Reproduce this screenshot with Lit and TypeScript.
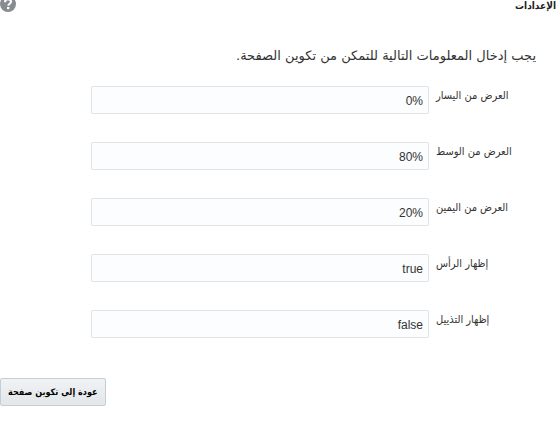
import { LitElement, html, css } from "lit";
import { customElement } from "lit/decorators.js";

interface Field {
  id: string;
  label: string;
  value: string;
}

const FIELDS: Field[] = [
  { id: "left-width", label: "العرض من اليسار", value: "0%" },
  { id: "center-width", label: "العرض من الوسط", value: "80%" },
  { id: "right-width", label: "العرض من اليمين", value: "20%" },
  { id: "show-header", label: "إظهار الرأس", value: "true" },
  { id: "show-footer", label: "إظهار التذييل", value: "false" },
];

@customElement("app-root")
export class AppRoot extends LitElement {
  static styles = css`
    :host {
      display: block;
      overflow: hidden;
      background: #fff;
      color: #333;
      font-family: "DejaVu Sans Condensed", "DejaVu Sans", sans-serif;
    }
    .header {
      display: flex;
      justify-content: space-between;
      align-items: flex-start;
      height: 40px;
      padding-right: 2px;
    }
    .title {
      margin: 0;
      color: #222;
      font-size: 10px;
      line-height: 12px;
      font-weight: 700;
    }
    .help {
      width: 16px;
      height: 16px;
      margin-top: -4px;
      padding: 0;
      border: 0;
      background: none;
    }
    .help svg {
      display: block;
    }
    .intro {
      margin: 0 22px 14px;
      font-family: "DejaVu Sans", sans-serif;
      font-size: 13px;
      line-height: 32px;
    }
    .fields {
      display: grid;
      gap: 28px;
      padding: 0 22px 0 91px;
    }
    .field {
      display: grid;
      grid-template-columns: 100px 1fr;
      column-gap: 7px;
    }
    .label {
      text-align: left;
      font-size: 11px;
      line-height: 20px;
      color: #333;
      white-space: nowrap;
    }
    .input {
      box-sizing: border-box;
      width: 100%;
      height: 28px;
      margin: 0;
      padding: 2px 5px 0;
      border: 1px solid #dfe4e7;
      border-radius: 2px;
      background: #fcfdfe;
      color: #333;
      font: 12px "Liberation Sans", sans-serif;
    }
    .actions {
      display: flex;
      justify-content: flex-end;
      margin-top: 40px;
    }
    .back {
      height: 28px;
      padding: 0 7px;
      border: 1px solid #c4ced7;
      border-radius: 2px;
      background: linear-gradient(#f0f2f4, #e3e7ea);
      color: #000;
      font: 700 9px "DejaVu Sans Condensed", "DejaVu Sans", sans-serif;
      white-space: nowrap;
    }
  `;

  render() {
    return html`
      <main dir="rtl" lang="ar">
        <header class="header">
          <h1 class="title">الإعدادات</h1>
          <button class="help" type="button" aria-label="تعليمات">
            <svg width="16" height="16" viewBox="0 0 16 16" aria-hidden="true">
              <circle cx="8" cy="8" r="8" fill="#878c90" />
              <path
                d="M5 6.2C5 4.2 6.2 3.2 8 3.2s3 1 3 2.6c0 2-2.7 2-2.7 4"
                fill="none"
                stroke="#fff"
                stroke-width="2"
              />
              <rect x="7" y="11" width="2.4" height="2.2" fill="#fff" />
            </svg>
          </button>
        </header>
        <p class="intro">يجب إدخال المعلومات التالية للتمكن من تكوين الصفحة.</p>
        <form class="fields">
          ${FIELDS.map(
            (f) => html`
              <div class="field">
                <label class="label" for=${f.id}>${f.label}</label>
                <input class="input" id=${f.id} type="text" .value=${f.value} />
              </div>
            `
          )}
        </form>
        <div class="actions">
          <button class="back" type="button">عودة إلى تكوين صفحة</button>
        </div>
      </main>
    `;
  }
}
